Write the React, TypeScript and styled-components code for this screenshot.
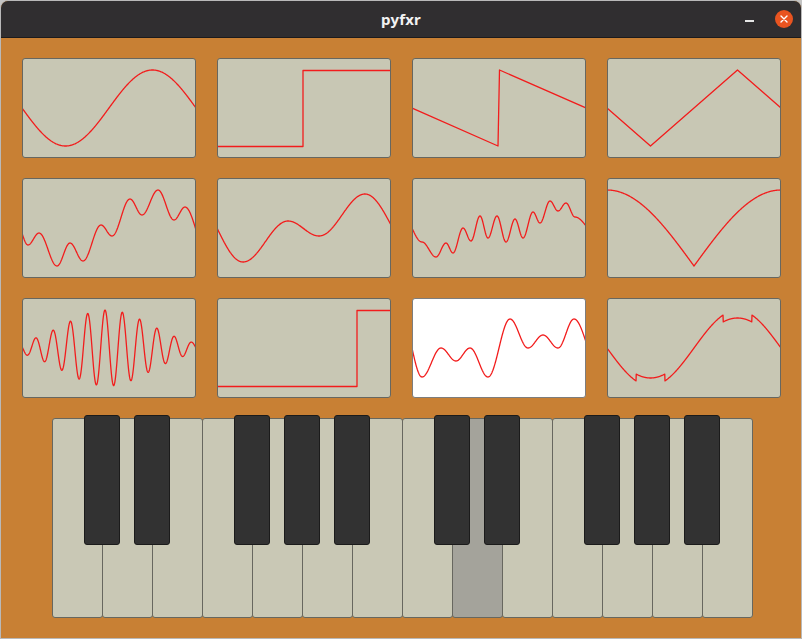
import styled, { createGlobalStyle } from 'styled-components';

const GlobalStyle = createGlobalStyle`
    html, body {
        margin: 0;
        padding: 0;
        background: #c4c4c4;
    }
    * {
        box-sizing: border-box;
    }
`;

const W = 174;
const H = 100;

type Pt = [number, number];

// sample a function across the card width
const curve = (f: (x: number) => number, step = 0.5) => {
    let d = '';
    for (let x = 0; x <= W + 0.001; x += step) {
        d += (x === 0 ? 'M' : 'L') + x.toFixed(2) + ' ' + f(x).toFixed(2) + ' ';
    }
    return d;
};

// smooth line through extrema, eased like a sine between them
const through = (pts: Pt[]) => {
    const out: Pt[] = [];
    for (let i = 0; i < pts.length - 1; i++) {
        const [x0, y0] = pts[i];
        const [x1, y1] = pts[i + 1];
        const n = Math.max(6, Math.round((x1 - x0) * 3));
        for (let k = i === 0 ? 0 : 1; k <= n; k++) {
            const t = k / n;
            let e;
            if (i === 0) e = Math.sin((t * Math.PI) / 2);
            else if (i === pts.length - 2) e = 1 - Math.cos((t * Math.PI) / 2);
            else e = (1 - Math.cos(t * Math.PI)) / 2;
            out.push([x0 + (x1 - x0) * t, y0 + (y1 - y0) * e]);
        }
    }
    return 'M' + out.map((p) => p[0].toFixed(2) + ' ' + p[1].toFixed(2)).join(' L');
};

const TAU = Math.PI * 2;

const waves: { d: string; lit?: boolean }[] = [
    { d: curve((x) => 50 + 38 * Math.sin((TAU * x) / W)) },
    { d: 'M0 88.5 L86 88.5 L86 12.5 L174 12.5' },
    { d: 'M0 50 L86 88 L87.5 12 L174 50' },
    { d: 'M0 50 L43.5 88 L130.5 12 L174 50' },
    {
        d: through([
            [0, 55], [6, 67], [17, 55], [35, 88], [48, 65], [61, 83], [79, 47],
            [90, 58], [108, 21], [120, 37], [136, 12], [152, 42], [163, 29], [174, 52],
        ]),
    },
    { d: through([[0, 50], [26, 84], [71, 43], [102, 58], [148, 16], [174, 47]]) },
    {
        d: through([
            [0, 50], [10, 64], [24, 79], [34, 65], [41, 75], [51, 50], [59, 63], [68, 38],
            [76, 60], [85, 38], [94, 64], [103, 41], [111, 60], [121, 34], [128, 45],
            [138, 23], [146, 33], [154, 25], [163, 39], [174, 48],
        ]),
    },
    { d: curve((x) => 88 - 76 * Math.abs(Math.cos((Math.PI * x) / W))) },
    {
        d: curve(
            (x) =>
                50 -
                38 * Math.exp(-(((x - 85) / 62) ** 2)) * Math.cos((TAU * (x - 83)) / 17.33),
            0.25,
        ),
    },
    { d: 'M0 88.5 L140 88.5 L140 12.5 L174 12.5' },
    {
        d: through([
            [0, 50], [10, 79], [29, 50], [44, 63], [58, 50], [76, 79], [98, 21],
            [116, 50], [131, 37], [146, 50], [162, 21], [174, 44],
        ]),
        lit: true,
    },
    {
        d: curve((x) => {
            const glitch = (x > 29 && x < 58) || (x > 116 && x < 145);
            return 50 + (glitch ? 30 : 38) * Math.sin((TAU * x) / W);
        }, 0.25),
    },
];

// 14 white keys, black keys sit on these boundaries
const blackAt = [1, 2, 4, 5, 6, 8, 9, 11, 12, 13];
const pressedKey = 8;

const Window = styled.div`
    width: 802px;
    height: 639px;
    border: 1px solid #b9b9b9;
    border-radius: 8px 8px 0 0;
    overflow: hidden;
    display: flex;
    flex-direction: column;
    background: #c88034;
`;

const TitleBar = styled.div`
    height: 37px;
    flex-shrink: 0;
    background: #302e30;
    border-bottom: 1px solid #1c1b1c;
    display: grid;
    grid-template-columns: 1fr auto 1fr;
    align-items: center;
`;

const Title = styled.div`
    grid-column: 2;
    color: #f2f2f2;
    font-family: 'Noto Sans', 'DejaVu Sans', sans-serif;
    font-weight: 700;
    font-size: 15px;
    letter-spacing: 0.2px;
    padding-bottom: 1px;
`;

const Controls = styled.div`
    grid-column: 3;
    justify-self: end;
    display: flex;
    align-items: center;
    gap: 21px;
    padding-right: 8px;
`;

const Minimize = styled.div`
    width: 9px;
    height: 1.5px;
    margin-top: 4px;
    background: #e6e6e6;
`;

const Close = styled.div`
    width: 18px;
    height: 18px;
    border-radius: 50%;
    background: #e95420;
    display: flex;
    align-items: center;
    justify-content: center;
`;

const Content = styled.div`
    flex: 1;
    display: flex;
    flex-direction: column;
    padding: 20px 0 0 21px;
`;

const Grid = styled.div`
    display: grid;
    grid-template-columns: repeat(4, ${W}px);
    grid-auto-rows: ${H}px;
    column-gap: 21px;
    row-gap: 20px;
`;

const Card = styled.div<{ $lit?: boolean }>`
    background: ${(p) => (p.$lit ? '#ffffff' : '#c8c7b4')};
    border: 1px solid ${(p) => (p.$lit ? '#7d7d7d' : '#676760')};
    border-radius: 3px;
    overflow: hidden;

    svg {
        display: block;
    }
`;

const Keyboard = styled.div`
    position: relative;
    align-self: flex-start;
    margin: 17px 0 0 30px;
    padding-top: 3px;
    display: flex;
`;

const WhiteKey = styled.div<{ $down?: boolean }>`
    width: 51px;
    height: 200px;
    margin-left: -1px;
    background: ${(p) => (p.$down ? '#a4a39b' : '#c9c8b5')};
    border: 1px solid #67675f;
    border-radius: 3px;

    &:first-child {
        margin-left: 0;
    }
`;

const BlackKey = styled.div`
    position: absolute;
    top: 0;
    width: 36px;
    height: 130px;
    background: #323232;
    border: 1px solid #1b1b1b;
    border-radius: 3px;
`;

export default function App() {
    return (
        <>
            <GlobalStyle />
            <Window>
                <TitleBar>
                    <Title>pyfxr</Title>
                    <Controls>
                        <Minimize />
                        <Close>
                            <svg width="8" height="8" viewBox="0 0 8 8">
                                <path d="M1 1 L7 7 M7 1 L1 7" stroke="#fff" strokeWidth="1.4" strokeLinecap="round" />
                            </svg>
                        </Close>
                    </Controls>
                </TitleBar>
                <Content>
                    <Grid>
                        {waves.map((w, i) => (
                            <Card key={i} $lit={w.lit}>
                                <svg width={W - 2} height={H - 2} viewBox={`1 1 ${W - 2} ${H - 2}`}>
                                    <path d={w.d} fill="none" stroke="#f21c1c" strokeWidth="1.3" strokeLinejoin="round" />
                                </svg>
                            </Card>
                        ))}
                    </Grid>
                    <Keyboard>
                        {Array.from({ length: 14 }, (_, i) => (
                            <WhiteKey key={i} $down={i === pressedKey} />
                        ))}
                        {blackAt.map((b) => (
                            <BlackKey key={b} style={{ left: b * 50 - 18 }} />
                        ))}
                    </Keyboard>
                </Content>
            </Window>
        </>
    );
}
